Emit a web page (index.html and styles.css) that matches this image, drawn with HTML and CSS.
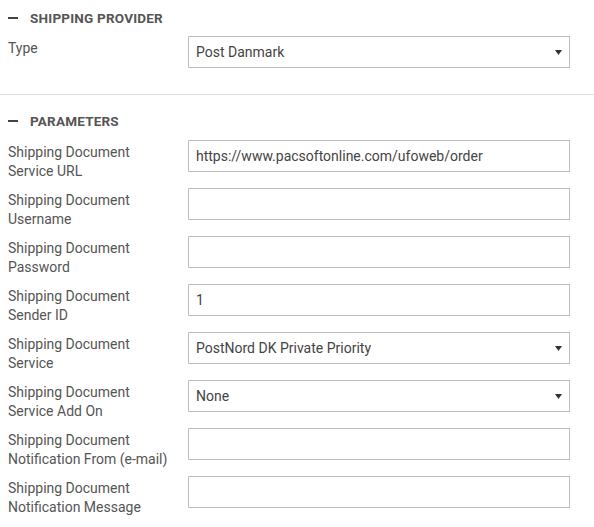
FILE: index.html
```html
<!DOCTYPE html>
<html>
<head>
<meta charset="utf-8">
<link rel="stylesheet" href="styles.css">
</head>
<body>
<div class="page">
  <section class="section first">
    <h2 class="section-title"><span class="dash"></span>SHIPPING PROVIDER</h2>
    <div class="rows">
      <div class="row">
        <label class="label">Type</label>
        <div class="field select"><span>Post Danmark</span><svg class="caret" width="7" height="5" viewBox="0 0 7 5"><path d="M0 0H7L3.5 5Z" fill="#333"/></svg></div>
      </div>
    </div>
  </section>
  <section class="section">
    <h2 class="section-title"><span class="dash"></span>PARAMETERS</h2>
    <div class="rows">
      <div class="row">
        <label class="label">Shipping Document Service URL</label>
        <div class="field"><span>https://www.pacsoftonline.com/ufoweb/order</span></div>
      </div>
      <div class="row">
        <label class="label">Shipping Document Username</label>
        <div class="field"></div>
      </div>
      <div class="row">
        <label class="label">Shipping Document Password</label>
        <div class="field"></div>
      </div>
      <div class="row">
        <label class="label">Shipping Document Sender ID</label>
        <div class="field"><span>1</span></div>
      </div>
      <div class="row">
        <label class="label">Shipping Document Service</label>
        <div class="field select"><span>PostNord DK Private Priority</span><svg class="caret" width="7" height="5" viewBox="0 0 7 5"><path d="M0 0H7L3.5 5Z" fill="#333"/></svg></div>
      </div>
      <div class="row">
        <label class="label">Shipping Document Service Add On</label>
        <div class="field select"><span>None</span><svg class="caret" width="7" height="5" viewBox="0 0 7 5"><path d="M0 0H7L3.5 5Z" fill="#333"/></svg></div>
      </div>
      <div class="row">
        <label class="label">Shipping Document Notification From (e-mail)</label>
        <div class="field"></div>
      </div>
      <div class="row">
        <label class="label">Shipping Document Notification Message</label>
        <div class="field"></div>
      </div>
    </div>
  </section>
</div>
</body>
</html>
```

FILE: styles.css
```css
* { box-sizing: border-box; }
html, body { margin: 0; padding: 0; background: #fff; }
body {
  font-family: Roboto, "Liberation Sans", sans-serif;
  color: #555;
  width: 594px;
  min-height: 527px;
}
.page { padding: 9px 24px 18px 8px; }
.section.first {
  border-bottom: 1px solid #e2e2e2;
  margin: 0 -24px 0 -8px;
  padding: 0 24px 26px 8px;
}
.section + .section { padding-top: 17px; }
.section-title {
  margin: 0 0 9px 0;
  height: 18px;
  line-height: 18px;
  font-size: 13.5px;
  font-weight: 700;
  color: #555;
  display: flex;
  align-items: center;
  letter-spacing: 0.2px;
}
.section + .section .section-title { margin-bottom: 10px; }
.dash {
  width: 10px;
  height: 2px;
  background: #444;
  margin-right: 12px;
}
.rows { display: flex; flex-direction: column; gap: 16px; }
.row {
  display: grid;
  grid-template-columns: 180px 382px;
  grid-template-rows: 32px;
}
.label {
  font-size: 14px;
  line-height: 19px;
  color: #555;
  padding-top: 3px;
  padding-right: 18px;
}
.field {
  height: 32px;
  border: 1px solid #bdbdbd;
  display: flex;
  align-items: center;
  justify-content: space-between;
  padding: 0 7px 0 7px;
  font-size: 14px;
  color: #444;
}
.caret { display: block; margin-top: 1px; }
```
